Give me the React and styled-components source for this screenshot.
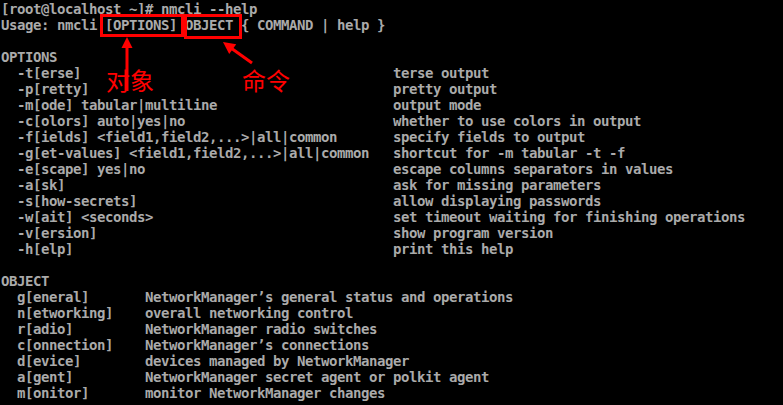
import React from 'react';
import styled, { createGlobalStyle } from 'styled-components';

const GlobalStyle = createGlobalStyle`
  html, body {
    margin: 0;
    padding: 0;
    background: #000;
  }
`

const Screen = styled.div`
  position: relative;
  width: 783px;
  height: 405px;
  overflow: hidden;
  background: #000;
  color: #aaaaaa;
  font-family: "DejaVu Sans Mono", "Liberation Mono", monospace;
  font-weight: bold;
  font-size: 14px;
  letter-spacing: -0.43px;
  padding: 1px 0 0 1px;
  box-sizing: border-box;
`

const Line = styled.div`
  height: 16px;
  line-height: 16px;
  white-space: pre;
`

const Row = styled.div`
  display: grid;
  grid-template-columns: ${props => props.$key}px 1fr;
  height: 16px;
  line-height: 16px;
  padding-left: 16px;
  white-space: pre;
`

const Mark = styled.div`
  position: absolute;
  left: ${props => props.$x}px;
  top: ${props => props.$y}px;
  width: ${props => props.$w}px;
  height: ${props => props.$h}px;
  border: 3px solid #ff0000;
  box-sizing: border-box;
`

const Label = styled.div`
  position: absolute;
  left: ${props => props.$x}px;
  top: ${props => props.$y}px;
  color: #ff0000;
  font-family: "Noto Sans CJK SC", sans-serif;
  font-weight: normal;
  font-size: 24px;
  line-height: 24px;
  letter-spacing: 0;
`

const Arrows = styled.svg`
  position: absolute;
  left: 0;
  top: 0;
  pointer-events: none;
`

const options = [
  ['-t[erse]', 'terse output'],
  ['-p[retty]', 'pretty output'],
  ['-m[ode] tabular|multiline', 'output mode'],
  ['-c[olors] auto|yes|no', 'whether to use colors in output'],
  ['-f[ields] <field1,field2,...>|all|common', 'specify fields to output'],
  ['-g[et-values] <field1,field2,...>|all|common', 'shortcut for -m tabular -t -f'],
  ['-e[scape] yes|no', 'escape columns separators in values'],
  ['-a[sk]', 'ask for missing parameters'],
  ['-s[how-secrets]', 'allow displaying passwords'],
  ['-w[ait] <seconds>', 'set timeout waiting for finishing operations'],
  ['-v[ersion]', 'show program version'],
  ['-h[elp]', 'print this help'],
]

const objects = [
  ['g[eneral]', 'NetworkManager\u2019s general status and operations'],
  ['n[etworking]', 'overall networking control'],
  ['r[adio]', 'NetworkManager radio switches'],
  ['c[onnection]', 'NetworkManager\u2019s connections'],
  ['d[evice]', 'devices managed by NetworkManager'],
  ['a[gent]', 'NetworkManager secret agent or polkit agent'],
  ['m[onitor]', 'monitor NetworkManager changes'],
]

const App = () => (
  <>
    <GlobalStyle />
    <Screen>
      <Line>[root@localhost ~]# nmcli --help</Line>
      <Line>Usage: nmcli [OPTIONS] OBJECT {'{'} COMMAND | help {'}'}</Line>
      <Line> </Line>
      <Line>OPTIONS</Line>
      {options.map(([flag, desc]) => (
        <Row $key={376} key={flag}>
          <span>{flag}</span>
          <span>{desc}</span>
        </Row>
      ))}
      <Line> </Line>
      <Line>OBJECT</Line>
      {objects.map(([name, desc]) => (
        <Row $key={128} key={name}>
          <span>{name}</span>
          <span>{desc}</span>
        </Row>
      ))}

      <Mark $x={100} $y={14} $w={84} $h={23} />
      <Mark $x={184} $y={14} $w={58} $h={25} />
      <Arrows width="783" height="405">
        <line x1="127" y1="47" x2="127" y2="91" stroke="#ff0000" strokeWidth="3" />
        <polygon points="127,37 121.5,48 132.5,48" fill="#ff0000" />
        <line x1="252" y1="63" x2="231" y2="48" stroke="#ff0000" strokeWidth="3" />
        <polygon points="223,42 229.2,54 236.2,44.2" fill="#ff0000" />
      </Arrows>
      <Label $x={106} $y={68}>对象</Label>
      <Label $x={242} $y={68}>命令</Label>
    </Screen>
  </>
)

export default App;
